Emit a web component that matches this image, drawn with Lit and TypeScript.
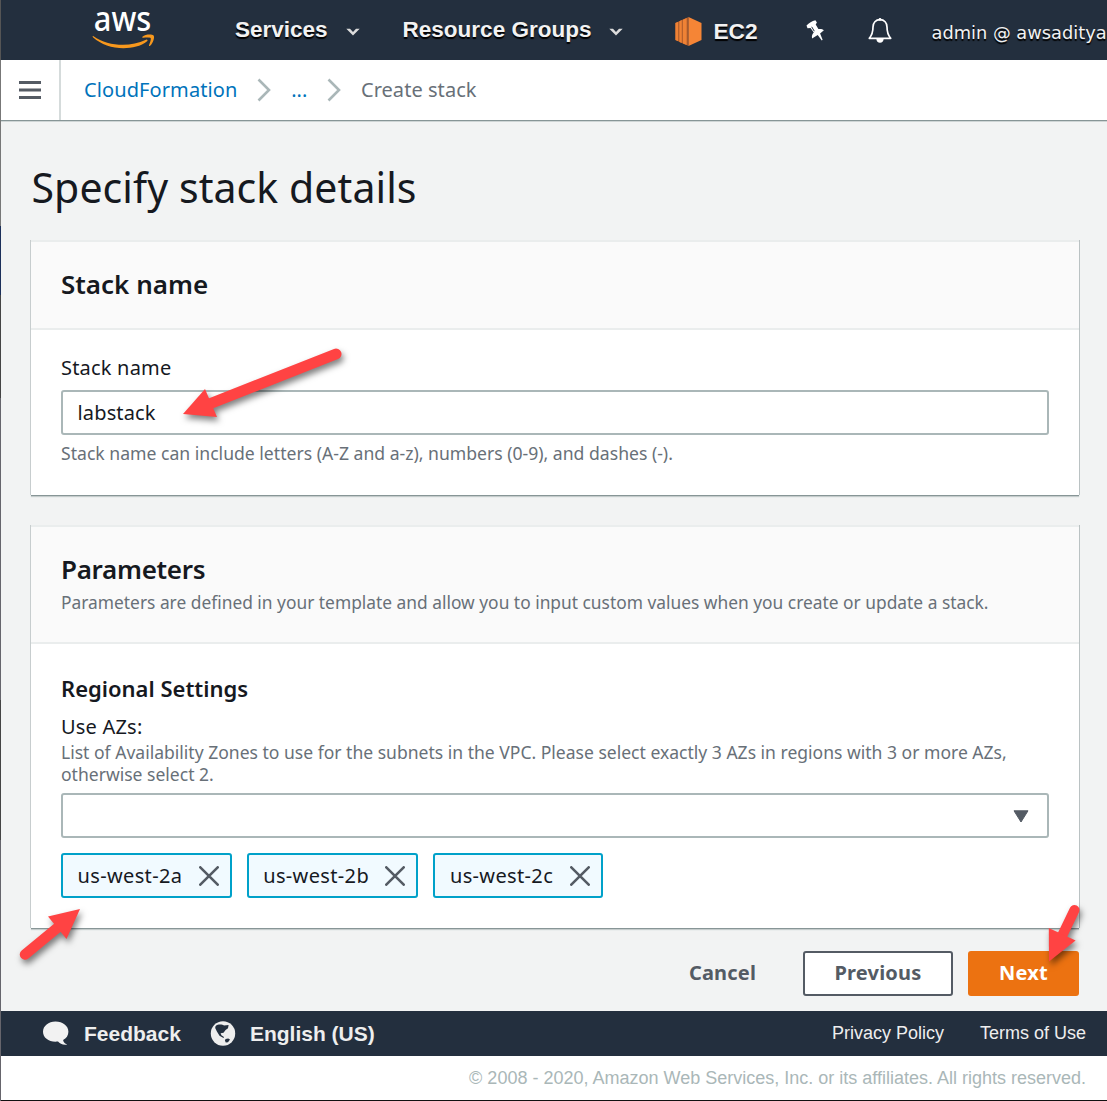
import { LitElement, html, css, svg } from "lit";
import { customElement, property } from "lit/decorators.js";

@customElement("top-nav")
export class TopNav extends LitElement {
  static styles = css`
    :host { display: flex; height: 60px; background: #232f3e; color: #f2f2f2; white-space: nowrap;
      font-family: "Liberation Sans", Arial, sans-serif; }
    svg { display: block; flex: none; overflow: visible; }
    .item { display: flex; align-items: center; height: 59px; font-size: 22.5px; line-height: 28px; font-weight: 700;
      text-shadow: 0 2px 1px #000; }
    .logo { margin: 8px 0 0 91px; }
    .services { margin-left: 79px; }
    .groups { margin-left: 43px; }
    .chev { margin: 4px 0 0 18px; }
    .ec2icon { margin: 17px 0 0 52px; }
    .ec2 { margin-left: 11px; height: 61px; font-size: 22.7px; }
    .pin { margin: 20px 0 0 48px; }
    .bell { margin: 17px 0 0 43px; }
    .user { margin-left: 40px; height: 65px; font: 400 17.8px/24px "DejaVu Sans", Verdana, sans-serif; }
  `;
  private chevron() {
    return html`<svg class="chev" width="14" height="8" viewBox="0 0 14 8"><path d="M.3.8H4L7 3.9 10 .8h3.7L7 7.6z" fill="#dcdcdc"/></svg>`;
  }
  render() {
    return html`
      <svg class="logo" width="64" height="42" viewBox="0 0 64 42">
        <text x="1.8" y="22.9" textLength="57.5" lengthAdjust="spacingAndGlyphs" font-family="Noto Sans, sans-serif"
          font-size="34" font-weight="500" fill="#fff">aws</text>
        <path d="M1.2 28C10 34.300 20 36.800 31 36.800c8 0 15.500-1.700 23-5.100 1.200-.5 2.200.7 1.100 1.600C49 38.300 40 40.200 31.500 40.200 20 40.200 9 36.300 1.200 29.400c-.8-.8-.7-1.800 0-1.400z" fill="#f7981d"/>
        <path d="M50.400 28.700c2.900-2.600 9.500-2.600 11.200-1.300 1.300 1.500-.4 7.800-3.500 10.300-.8.600-1.400.3-1-.7 1-2.300 2.200-6 1.500-6.900-.8-.9-4.900-.7-7.200-.4-.9.100-1.500-.5-1-1z" fill="#f7981d"/>
      </svg>
      <div class="item services">Services ${this.chevron()}</div>
      <div class="item groups">Resource Groups ${this.chevron()}</div>
      <svg class="ec2icon" width="27" height="29" viewBox="0 0 27 29">
        <path d="M.4 6 13.500 0v29L.4 23z" fill="#a9592a"/>
        <path d="M.4 6 3.200 4.700v19.600L.4 23zM4.300 4.200l2.500-1.100v22.800l-2.500-1zM7.800 2.700l3.900-1.800v27.200L7.800 26.400z" fill="#ef8235"/>
        <path d="M13.500 0 26.500 6v17l-13 6z" fill="#f58536"/>
      </svg>
      <div class="item ec2">EC2</div>
      <svg class="pin" width="19" height="22" viewBox="0 0 19 22">
        <path d="M.5 5.400C3 2.800 6 .9 9.400.2l1.500 2.300-1.200 2 2.700 4.600c2-.5 4-.1 5.500 1.200l-3.800 3.200 2.500 6.300-.8.600-4.100-5.300-5.600 3.500c-.6-2.400.1-4.400 1.700-6.100L4.500 7.900l-3 .3z" fill="#fff"/>
        <path d="M5.700 6.800 8.300 11.200" stroke="#232f3e" stroke-width="1"/>
      </svg>
      <svg class="bell" width="24" height="27" viewBox="0 0 24 27">
        <path d="M12 2.700c-4.300 0-7 3-7 7.300 0 6.200-1.400 8.600-3.700 11.300h21.400C20.400 18.600 19 16.200 19 10c0-4.300-2.700-7.300-7-7.300z" fill="none" stroke="#fff" stroke-width="1.700" stroke-linejoin="round"/>
        <circle cx="12" cy="2.400" r="1.400" fill="#fff"/>
        <path d="M8.400 22h7.200c0 2.400-1.500 3.700-3.600 3.700s-3.600-1.300-3.600-3.700z" fill="#fff"/>
      </svg>
      <div class="item user">admin @ awsaditya</div>`;
  }
}

@customElement("crumb-bar")
export class CrumbBar extends LitElement {
  static styles = css`
    :host { display: flex; height: 60px; background: #fff; border-bottom: 1px solid #879596; box-shadow: 0 1px 0 #cfd5d5;
      font: 400 20px/26px "Noto Sans", sans-serif; letter-spacing: .1px; color: #687078; }
    .menu { box-sizing: border-box; width: 60px; border-right: 2px solid #d5dbdb; display: flex; align-items: center; padding-left: 18px; }
    .trail { display: flex; align-items: center; height: 59px; padding-left: 23px; }
    .link { color: #0073bb; }
    .sep { margin: 1px 20px 0 19.7px; }
    .dots { letter-spacing: 0; }
    .here { letter-spacing: .05px; }
  `;
  private sep() {
    return html`<svg class="sep" width="14" height="24" viewBox="0 0 14 24"><path d="M1.500 1.500 12 12 1.500 22.500" fill="none" stroke="#aab7b8" stroke-width="2.600"/></svg>`;
  }
  render() {
    return html`
      <div class="menu"><svg width="22" height="18" viewBox="0 0 22 18"><path d="M0 1.500h22M0 9h22M0 16.500h22" stroke="#545b64" stroke-width="2.800"/></svg></div>
      <div class="trail"><span class="link">CloudFormation</span>${this.sep()}<span class="link dots">...</span>${this.sep()}<span class="here">Create stack</span></div>`;
  }
}

@customElement("az-token")
export class AzToken extends LitElement {
  @property() label = "";
  static styles = css`
    :host { box-sizing: border-box; display: flex; align-items: center; height: 45px; border: 2px solid #00a1c9; border-radius: 3px;
      background: #f1faff; padding: 0 11px 0 14.5px; color: #16191f; font: 400 20px/26px "Noto Sans", sans-serif; letter-spacing: .35px; }
    svg { margin-left: 16.4px; }
  `;
  render() {
    return html`<span>${this.label}</span><svg width="20" height="20" viewBox="0 0 20 20"><path d="M1.300 1.300 18.700 18.700M18.700 1.300 1.300 18.700" stroke="#545b64" stroke-width="2.600" stroke-linecap="round"/></svg>`;
  }
}

@customElement("site-footer")
export class SiteFooter extends LitElement {
  static styles = css`
    :host { display: block; font-family: "Liberation Sans", Arial, sans-serif; white-space: nowrap; }
    .bar { display: flex; align-items: center; height: 45px; background: #232f3e; color: #eee; padding: 0 21px 0 41px; }
    .strong { font-size: 21px; line-height: 26px; font-weight: 700; }
    .feedback { margin: 0 29px 0 15px; }
    .lang { margin-left: 14px; }
    .small { font-size: 18px; line-height: 24px; margin-bottom: 1px; }
    .privacy { margin-left: auto; }
    .terms { margin-left: 36px; }
    .copy { height: 44px; display: flex; align-items: center; justify-content: flex-end; padding-right: 21px; background: #fff;
      color: #aab7b8; font-size: 18px; border-bottom: 1px solid #111; }
  `;
  render() {
    return html`
      <div class="bar">
        <svg width="27" height="25" viewBox="0 0 27 25"><path d="M13.500.6C20.800.6 26.400 5 26.400 10.700c0 3.700-2 6.600-5.300 8.400.3 2.100 1.700 3.500 4.100 4.500-4.200.7-7.300-.8-9.200-3.100C7.500 21.600 1 17 1 10.700 1 5 6.500.6 13.500.6z" fill="#f2f2f2"/></svg>
        <span class="strong feedback">Feedback</span>
        <svg width="26" height="25" viewBox="0 0 26 25">
          <circle cx="13" cy="12.500" r="12.200" fill="#eee"/>
          <path d="M5.500 5.200C8 3 12 3.400 14 4.500l4.600-.6-.6 3.300-2.400 1.700-2.100 2.800-2.900.6.8 2 2.600 1.700-.5 1-4-2.200-2.600-4.400-1.700-3.300zM15.600 18l2.600-.6 1.800 1-2 2.800-2.200.3-.9-2z" fill="#232f3e"/>
        </svg>
        <span class="strong lang">English (US)</span>
        <span class="small privacy">Privacy Policy</span>
        <span class="small terms">Terms of Use</span>
      </div>
      <div class="copy"><span>© 2008 - 2020, Amazon Web Services, Inc. or its affiliates. All rights reserved.</span></div>`;
  }
}

const arrows = [
  { tail: "336 354", neck: "208 404.500", head: "183 414 205 389 217 417", w: 11 },
  { tail: "25 954.500", neck: "62 924", head: "80 909 48 916.500 66.500 939", w: 10.5 },
  { tail: "1074.500 910", neck: "1061 938", head: "1049 961.500 1048.800 928 1075.600 940.500", w: 10 },
];

@customElement("app-root")
export class AppRoot extends LitElement {
  static styles = css`
    :host { display: flex; position: relative; width: 1107px; height: 1101px; overflow: hidden; background: #f2f3f3;
      font-family: "Noto Sans", sans-serif; color: #16191f; }
    .edge { flex: none; width: 1px; background: linear-gradient(#555 0 60px, #777 60px 226px, #1c2f5a 226px 295px, #444 295px 398px, #66656c 398px 700px, #444 700px 840px, #66656c 840px); }
    .page { flex: 1; min-width: 0; display: flex; flex-direction: column; }
    main { height: 890px; box-sizing: border-box; padding: 38px 28px 0 30px; }
    h1 { margin: 0 0 25px .5px; font-size: 41px; line-height: 56px; font-weight: 400; letter-spacing: .08px; }
    .card { box-sizing: border-box; background: #fff; border-top: 2px solid #eaeded; margin-bottom: 30px;
      box-shadow: 0 1px 0 #879596, 0 2px 1px #c5cccc, -1px 0 0 #c8cdce, 1px 0 0 #b9c0c1; }
    .first { height: 255px; }
    .second { height: 403px; margin-bottom: 23px; }
    .head { box-sizing: border-box; background: #fafafa; border-bottom: 2px solid #eaeded; padding: 26px 30px 0; height: 88px; }
    .second .head { height: 117px; }
    h2 { margin: 0; font-size: 26px; line-height: 32px; font-weight: 600; letter-spacing: 0; }
    .second h2 { letter-spacing: -.3px; }
    .desc { margin-top: 6px; font-size: 17.37px; line-height: 22px; color: #687078; white-space: nowrap; }
    .body { padding: 25px 30px 0; }
    .second .body { padding-top: 30px; }
    .label { font-size: 20px; line-height: 26px; letter-spacing: .2px; }
    .field { box-sizing: border-box; height: 45px; border: 2px solid #aab7b8; border-radius: 3px; display: flex; align-items: center;
      margin-top: 9px; padding: 0 18px 0 14.5px; font-size: 20px; line-height: 26px; letter-spacing: .15px; background: #fff; }
    .hint { margin-top: 7px; font-size: 17.6px; line-height: 22px; color: #687078; white-space: nowrap; }
    h3 { margin: 0 0 12px; font-size: 22px; line-height: 28px; font-weight: 600; }
    .zones { margin-top: 1px; font-size: 17.55px; }
    .select { justify-content: flex-end; margin-top: 8px; }
    .select svg { margin-top: 1px; }
    .tokens { display: flex; gap: 15px; margin-top: 15px; }
    .actions { display: flex; gap: 15px; justify-content: flex-end; }
    .btn { box-sizing: border-box; height: 45px; border-radius: 3px; display: flex; align-items: center; justify-content: center;
      padding-bottom: 2px; font-size: 20px; line-height: 26px; font-weight: 700; letter-spacing: .2px; color: #545b64; }
    .cancel { width: 131px; }
    .previous { width: 150px; border: 2px solid #545b64; background: #fff; }
    .next { width: 111px; background: #ec7211; color: #fff; }
    .notes { position: absolute; left: 0; top: 0; filter: drop-shadow(2px 4px 3px rgba(0, 0, 0, .5)); }
  `;
  render() {
    return html`
      <div class="edge"></div>
      <div class="page">
        <top-nav></top-nav>
        <crumb-bar></crumb-bar>
        <main>
          <h1>Specify stack details</h1>
          <section class="card first">
            <div class="head"><h2>Stack name</h2></div>
            <div class="body">
              <div class="label">Stack name</div>
              <div class="field">labstack</div>
              <div class="hint">Stack name can include letters (A-Z and a-z), numbers (0-9), and dashes (-).</div>
            </div>
          </section>
          <section class="card second">
            <div class="head">
              <h2>Parameters</h2>
              <div class="desc">Parameters are defined in your template and allow you to input custom values when you create or update a stack.</div>
            </div>
            <div class="body">
              <h3>Regional Settings</h3>
              <div class="label">Use AZs:</div>
              <div class="hint zones">List of Availability Zones to use for the subnets in the VPC. Please select exactly 3 AZs in regions with 3 or more AZs,<br>otherwise select 2.</div>
              <div class="field select"><svg width="16" height="13" viewBox="0 0 16 13"><path d="M1 .8h14L8 12z" fill="#545b64" stroke="#545b64" stroke-linejoin="round"/></svg></div>
              <div class="tokens">${["a", "b", "c"].map((z) => html`<az-token label=${"us-west-2" + z}></az-token>`)}</div>
            </div>
          </section>
          <div class="actions">
            <div class="btn cancel">Cancel</div>
            <div class="btn previous">Previous</div>
            <div class="btn next">Next</div>
          </div>
        </main>
        <site-footer></site-footer>
      </div>
      <svg class="notes" width="1107" height="1101" viewBox="0 0 1107 1101">
        ${arrows.map((a) => svg`<path d=${`M${a.tail}L${a.neck}`} stroke="#ff4343" stroke-width=${a.w} stroke-linecap="round"/><polygon points=${a.head} fill="#ff4343"/>`)}
      </svg>`;
  }
}
